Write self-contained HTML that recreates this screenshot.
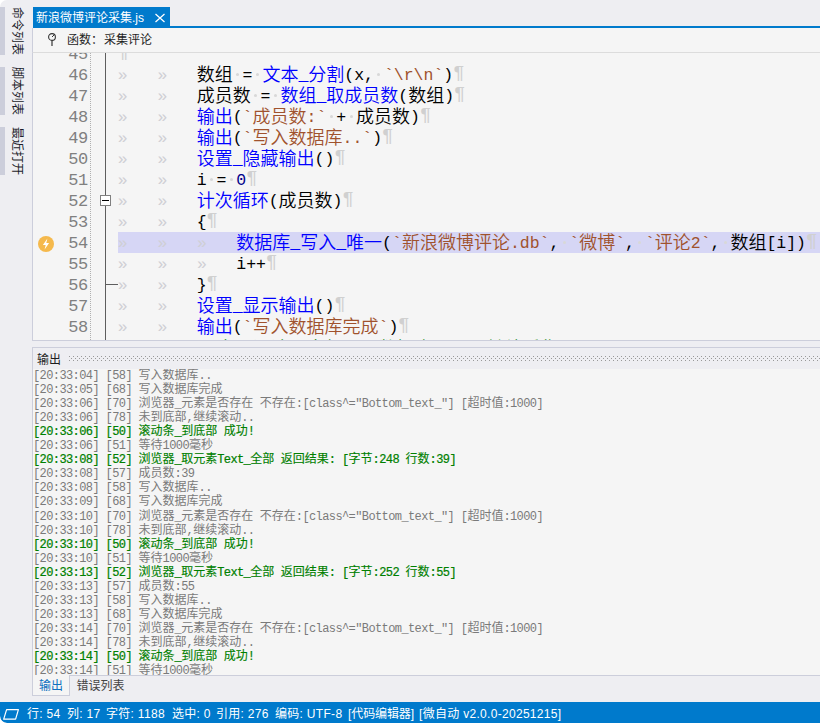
<!DOCTYPE html>
<html lang="zh-CN">
<head>
<meta charset="utf-8">
<title>新浪微博评论采集.js</title>
<style>
html,body{margin:0;padding:0}
html{background:#fff}
body{width:820px;height:723px;overflow:hidden;position:relative;background:#eeeef2;border-radius:7px 0 0 7px;
 font-family:"Liberation Sans","Noto Sans CJK SC",sans-serif;font-size:12px;color:#1e1e1e}
div,span,i{box-sizing:border-box}
.abs{position:absolute}
/* ---- side bar ---- */
.sbar{position:absolute;left:0;width:5px;height:48px;background:#ccceDB}
.stxt{position:absolute;left:4.5px;width:24px;height:48px;writing-mode:vertical-rl;text-orientation:sideways;
 font-size:12px;line-height:24px;color:#1c1c2a;white-space:nowrap;letter-spacing:0}
/* ---- doc tab ---- */
#tab{position:absolute;left:33px;top:7px;width:137px;height:19px;background:#007acc;color:#fff;font-size:12px;line-height:19px;white-space:nowrap}
#tab .t{position:absolute;left:3px;top:2px}
#tabline{position:absolute;left:33px;top:26px;width:787px;height:2px;background:#007acc}
#fbar{position:absolute;left:32px;top:28px;width:788px;height:25px;background:#f5f5f5;border-left:1px solid #ccceDB;border-bottom:1px solid #dcdcdc}
#fbar .t{position:absolute;left:34px;top:4px;font-size:12px;line-height:16px;color:#1e1e1e;white-space:nowrap}
/* ---- editor ---- */
#ed{position:absolute;left:32px;top:53px;width:788px;height:288px;background:#f5f5f5;overflow:hidden;
 border-left:1px solid #ccceDB;border-bottom:1px solid #ccceDB}
#edin{position:absolute;left:-33px;top:-53px;width:820px;height:723px}
.ln{position:absolute;left:0;width:820px;height:21px}
.ln.hl::before{content:"";position:absolute;left:118px;top:0;width:702px;height:21px;background:#d6d6f5}
.ln span,.ln i{position:absolute;top:0;height:21px;line-height:21px;white-space:pre;font-style:normal}
.a{font-family:"Liberation Mono",monospace;font-size:16.5px;margin-top:1px}
.c{font-family:"Noto Sans CJK SC",sans-serif;font-size:18px;margin-top:-1px;font-weight:350}
.k{color:#000}
.f{color:#0000ff}
.s{color:#a0522d}
.eol{color:#d0d0d0;font-size:19px !important;margin-top:-1px !important}
.m{color:#008000}
.d{color:#00008b}
.tb{font-family:"Liberation Mono",monospace;font-size:16.5px;color:#cfcfd4;margin-top:1px}
.dt{width:3px;height:3px !important;top:9px !important;border-radius:50%;background:#d8d8d8}
.num{position:absolute;left:33px;width:55px;height:21px;line-height:21px;text-align:right;
 font-family:"Liberation Mono",monospace;font-size:17px;letter-spacing:-0.3px;color:#808080;margin-top:1px}
#dots{position:absolute;left:90px;top:53px;width:1px;height:288px;
 background:repeating-linear-gradient(to bottom,#b0b0b0 0,#b0b0b0 1px,transparent 1px,transparent 2px)}
#fold{position:absolute;left:105px;top:53px;width:1px;height:288px;background:#5e5e5e}
#fbox{position:absolute;left:100px;top:195px;width:11px;height:11px;border:1px solid #808080;background:#fff}
#fbox::after{content:"";position:absolute;left:1px;top:4px;width:7px;height:1px;background:#000}
#fend{position:absolute;left:105px;top:284px;width:13px;height:1px;background:#5e5e5e}
#bolt{position:absolute;left:37.7px;top:235.5px;width:16px;height:16px}
/* ---- output ---- */
#op{position:absolute;left:32px;top:347px;width:788px;height:329px;border-left:1px solid #ccceDB;border-top:1px solid #ccceDB;border-bottom:1px solid #ccceDB;background:#eeeef2}
#optitle{position:absolute;left:37px;top:352px;font-size:12px;line-height:16px;color:#1e1e1e}
#grip{position:absolute;left:69px;top:356px;width:751px;height:5px}
#ot{position:absolute;left:33px;top:369px;width:787px;height:306px;background:#f5f5f5;overflow:hidden}
#otin{position:absolute;left:-33px;top:-369px;width:820px;height:723px}
.ol{position:absolute;left:0;width:820px;height:14px}
.ol span{position:absolute;top:0;height:14px;line-height:14px;white-space:pre}
.oa{font-family:"Liberation Mono",monospace;font-size:12px;letter-spacing:-0.6px;margin-top:1px}
.oc{font-family:"Noto Sans CJK SC",sans-serif;font-size:12px;margin-top:-1px}
.n{color:#7a7a7a}
.g{color:#008000;-webkit-text-stroke:0.22px #008000}
.g .oc{-webkit-text-stroke:0.12px #008000}
/* ---- bottom tabs ---- */
#bt1{position:absolute;left:32px;top:675px;width:38px;height:21px;background:#f5f5f5;border:1px solid #ccceDB;border-top:none;color:#0e70c0;font-size:12px;line-height:22px;text-align:center;overflow:hidden}
#bt2{position:absolute;left:76.5px;top:675px;font-size:12px;line-height:22px;color:#444}
/* ---- status ---- */
#sb{position:absolute;left:0;top:702px;width:820px;height:21px;background:#007acc;color:#fff;font-size:12px;border-bottom-left-radius:7px}
#sb span{position:absolute;top:2px;height:21px;line-height:21px;white-space:pre;letter-spacing:0.3px}
</style>
</head>
<body>
<!-- side bar -->
<div class="sbar" style="top:7px"></div><div class="stxt" style="top:7px">命令列表</div>
<div class="sbar" style="top:67px"></div><div class="stxt" style="top:67px">脚本列表</div>
<div class="sbar" style="top:127px"></div><div class="stxt" style="top:127px">最近打开</div>

<!-- document tab -->
<div id="tab"><span class="t">新浪微博评论采集.js</span>
<svg class="abs" style="left:122px;top:6px" width="10" height="10" viewBox="0 0 10 10"><path d="M0.5 1 L9.5 9 M9.5 1 L0.5 9" stroke="#fff" stroke-width="1.25" fill="none"/></svg></div>
<div id="tabline"></div>
<div id="fbar">
<svg class="abs" style="left:14px;top:4px" width="10" height="15" viewBox="0 0 10 15"><circle cx="5" cy="5" r="3.4" fill="none" stroke="#333" stroke-width="1.1"/><path d="M5 8.4 V14" stroke="#333" stroke-width="1.2"/><path d="M5 5 L7 3" stroke="#333" stroke-width="1"/></svg>
<span class="t">函数：</span><span class="t" style="left:71px">采集评论</span></div>

<!-- editor -->
<div id="ed"><div id="edin">
<div class="num" style="top:43px">45</div>
<div class="num" style="top:64px">46</div>
<div class="num" style="top:85px">47</div>
<div class="num" style="top:106px">48</div>
<div class="num" style="top:127px">49</div>
<div class="num" style="top:148px">50</div>
<div class="num" style="top:169px">51</div>
<div class="num" style="top:190px">52</div>
<div class="num" style="top:211px">53</div>
<div class="num" style="top:232px">54</div>
<div class="num" style="top:253px">55</div>
<div class="num" style="top:274px">56</div>
<div class="num" style="top:295px">57</div>
<div class="num" style="top:316px">58</div>
<div class="num" style="top:337px">59</div>
<div id="dots"></div>
<div id="fold"></div>
<div id="fbox"></div>
<div id="fend"></div>
<div class="ln" style="top:43px">
<span class="a eol" style="left:117.5px">¶</span>
</div>
<div class="ln" style="top:64px">
<i class="tb" style="left:117.8px">»</i>
<i class="tb" style="left:157.4px">»</i>
<span class="c k" style="left:196.7px">数组</span>
<i class="dt" style="left:236.1px"></i>
<span class="a k" style="left:242.6px">=</span>
<i class="dt" style="left:255.9px"></i>
<span class="c f" style="left:262.4px">文本</span>
<span class="a f" style="left:298.4px">_</span>
<span class="c f" style="left:308.3px">分割</span>
<span class="a k" style="left:344.3px">(x,</span>
<i class="dt" style="left:377.4px"></i>
<span class="a s" style="left:383.9px">`\r\n`</span>
<span class="a k" style="left:443.3px">)</span>
<span class="a eol" style="left:453.2px">¶</span>
</div>
<div class="ln" style="top:85px">
<i class="tb" style="left:117.8px">»</i>
<i class="tb" style="left:157.4px">»</i>
<span class="c k" style="left:196.7px">成员数</span>
<i class="dt" style="left:254.1px"></i>
<span class="a k" style="left:260.6px">=</span>
<i class="dt" style="left:273.9px"></i>
<span class="c f" style="left:280.4px">数组</span>
<span class="a f" style="left:316.4px">_</span>
<span class="c f" style="left:326.3px">取成员数</span>
<span class="a k" style="left:398.3px">(</span>
<span class="c k" style="left:408.2px">数组</span>
<span class="a k" style="left:444.2px">)</span>
<span class="a eol" style="left:454.1px">¶</span>
</div>
<div class="ln" style="top:106px">
<i class="tb" style="left:117.8px">»</i>
<i class="tb" style="left:157.4px">»</i>
<span class="c f" style="left:196.7px">输出</span>
<span class="a k" style="left:232.7px">(</span>
<span class="a s" style="left:242.6px">`</span>
<span class="c s" style="left:252.5px">成员数</span>
<span class="a s" style="left:306.5px">:`</span>
<i class="dt" style="left:329.7px"></i>
<span class="a k" style="left:336.2px">+</span>
<i class="dt" style="left:349.5px"></i>
<span class="c k" style="left:356.0px">成员数</span>
<span class="a k" style="left:410.0px">)</span>
<span class="a eol" style="left:419.9px">¶</span>
</div>
<div class="ln" style="top:127px">
<i class="tb" style="left:117.8px">»</i>
<i class="tb" style="left:157.4px">»</i>
<span class="c f" style="left:196.7px">输出</span>
<span class="a k" style="left:232.7px">(</span>
<span class="a s" style="left:242.6px">`</span>
<span class="c s" style="left:252.5px">写入数据库</span>
<span class="a s" style="left:342.5px">..`</span>
<span class="a k" style="left:372.2px">)</span>
<span class="a eol" style="left:382.1px">¶</span>
</div>
<div class="ln" style="top:148px">
<i class="tb" style="left:117.8px">»</i>
<i class="tb" style="left:157.4px">»</i>
<span class="c f" style="left:196.7px">设置</span>
<span class="a f" style="left:232.7px">_</span>
<span class="c f" style="left:242.6px">隐藏输出</span>
<span class="a k" style="left:314.6px">()</span>
<span class="a eol" style="left:334.4px">¶</span>
</div>
<div class="ln" style="top:169px">
<i class="tb" style="left:117.8px">»</i>
<i class="tb" style="left:157.4px">»</i>
<span class="a k" style="left:196.7px">i</span>
<i class="dt" style="left:210.0px"></i>
<span class="a k" style="left:216.5px">=</span>
<i class="dt" style="left:229.8px"></i>
<span class="a d" style="left:236.3px">0</span>
<span class="a eol" style="left:246.2px">¶</span>
</div>
<div class="ln" style="top:190px">
<i class="tb" style="left:117.8px">»</i>
<i class="tb" style="left:157.4px">»</i>
<span class="c f" style="left:196.7px">计次循环</span>
<span class="a k" style="left:268.7px">(</span>
<span class="c k" style="left:278.6px">成员数</span>
<span class="a k" style="left:332.6px">)</span>
<span class="a eol" style="left:342.5px">¶</span>
</div>
<div class="ln" style="top:211px">
<i class="tb" style="left:117.8px">»</i>
<i class="tb" style="left:157.4px">»</i>
<span class="a k" style="left:196.7px">{</span>
<span class="a eol" style="left:206.6px">¶</span>
</div>
<div class="ln hl" style="top:232px">
<i class="tb" style="left:117.8px">»</i>
<i class="tb" style="left:157.4px">»</i>
<i class="tb" style="left:197.0px">»</i>
<span class="c f" style="left:236.3px">数据库</span>
<span class="a f" style="left:290.3px">_</span>
<span class="c f" style="left:300.2px">写入</span>
<span class="a f" style="left:336.2px">_</span>
<span class="c f" style="left:346.1px">唯一</span>
<span class="a k" style="left:382.1px">(</span>
<span class="a s" style="left:392.0px">`</span>
<span class="c s" style="left:401.9px">新浪微博评论</span>
<span class="a s" style="left:509.9px">.db`</span>
<span class="a k" style="left:549.5px">,</span>
<i class="dt" style="left:562.8px"></i>
<span class="a s" style="left:569.3px">`</span>
<span class="c s" style="left:579.2px">微博</span>
<span class="a s" style="left:615.2px">`</span>
<span class="a k" style="left:625.1px">,</span>
<i class="dt" style="left:638.4px"></i>
<span class="a s" style="left:644.9px">`</span>
<span class="c s" style="left:654.8px">评论</span>
<span class="a s" style="left:690.8px">2`</span>
<span class="a k" style="left:710.6px">,</span>
<i class="dt" style="left:723.9px"></i>
<span class="c k" style="left:730.4px">数组</span>
<span class="a k" style="left:766.4px">[i])</span>
<span class="a eol" style="left:806.0px">¶</span>
</div>
<div class="ln" style="top:253px">
<i class="tb" style="left:117.8px">»</i>
<i class="tb" style="left:157.4px">»</i>
<i class="tb" style="left:197.0px">»</i>
<span class="a k" style="left:236.3px">i++</span>
<span class="a eol" style="left:266.0px">¶</span>
</div>
<div class="ln" style="top:274px">
<i class="tb" style="left:117.8px">»</i>
<i class="tb" style="left:157.4px">»</i>
<span class="a k" style="left:196.7px">}</span>
<span class="a eol" style="left:206.6px">¶</span>
</div>
<div class="ln" style="top:295px">
<i class="tb" style="left:117.8px">»</i>
<i class="tb" style="left:157.4px">»</i>
<span class="c f" style="left:196.7px">设置</span>
<span class="a f" style="left:232.7px">_</span>
<span class="c f" style="left:242.6px">显示输出</span>
<span class="a k" style="left:314.6px">()</span>
<span class="a eol" style="left:334.4px">¶</span>
</div>
<div class="ln" style="top:316px">
<i class="tb" style="left:117.8px">»</i>
<i class="tb" style="left:157.4px">»</i>
<span class="c f" style="left:196.7px">输出</span>
<span class="a k" style="left:232.7px">(</span>
<span class="a s" style="left:242.6px">`</span>
<span class="c s" style="left:252.5px">写入数据库完成</span>
<span class="a s" style="left:378.5px">`</span>
<span class="a k" style="left:388.4px">)</span>
<span class="a eol" style="left:398.3px">¶</span>
</div>
<div class="ln" style="top:338px">
<i class="tb" style="left:117.8px">»</i>
<i class="tb" style="left:157.4px">»</i>
<span class="a m" style="left:196.7px">//</span>
<span class="c m" style="left:216.5px">当日评论已全部写入数据库，可以继续采集下一页了</span>
</div>
<svg id="bolt" viewBox="0 0 16 16"><circle cx="8" cy="8" r="8" fill="#f5b94c"/><path d="M9.4 2.6 L4.9 9 H7.7 L6.6 13.4 L11.1 7 H8.3 Z" fill="#fff"/></svg>
</div></div>

<!-- output panel -->
<div id="op"></div>
<div id="optitle">输出</div>
<svg id="grip" width="751" height="5"><defs><pattern id="gp" width="4" height="4" patternUnits="userSpaceOnUse"><rect x="0" y="0" width="1" height="1" fill="#999"/><rect x="2" y="2" width="1" height="1" fill="#999"/></pattern></defs><rect width="751" height="5" fill="url(#gp)"/></svg>
<div id="ot"><div id="otin">
<div class="ol n" style="top:368.0px">
<span class="oa" style="left:33.0px">[20:33:04] [58] </span>
<span class="oc" style="left:138.6px">写入数据库</span>
<span class="oa" style="left:198.6px">..</span>
</div>
<div class="ol n" style="top:382.05px">
<span class="oa" style="left:33.0px">[20:33:05] [68] </span>
<span class="oc" style="left:138.6px">写入数据库完成</span>
</div>
<div class="ol n" style="top:396.1px">
<span class="oa" style="left:33.0px">[20:33:06] [70] </span>
<span class="oc" style="left:138.6px">浏览器</span>
<span class="oa" style="left:174.6px">_</span>
<span class="oc" style="left:181.2px">元素是否存在</span>
<span class="oa" style="left:253.2px"> </span>
<span class="oc" style="left:259.8px">不存在</span>
<span class="oa" style="left:295.8px">:[class^="Bottom_text_"] [</span>
<span class="oc" style="left:467.4px">超时值</span>
<span class="oa" style="left:503.4px">:1000]</span>
</div>
<div class="ol n" style="top:410.15px">
<span class="oa" style="left:33.0px">[20:33:06] [78] </span>
<span class="oc" style="left:138.6px">未到底部</span>
<span class="oa" style="left:186.6px">,</span>
<span class="oc" style="left:193.2px">继续滚动</span>
<span class="oa" style="left:241.2px">..</span>
</div>
<div class="ol g" style="top:424.2px">
<span class="oa" style="left:33.0px">[20:33:06] [50] </span>
<span class="oc" style="left:138.6px">滚动条</span>
<span class="oa" style="left:174.6px">_</span>
<span class="oc" style="left:181.2px">到底部</span>
<span class="oa" style="left:217.2px"> </span>
<span class="oc" style="left:223.8px">成功</span>
<span class="oa" style="left:247.8px">!</span>
</div>
<div class="ol n" style="top:438.25px">
<span class="oa" style="left:33.0px">[20:33:06] [51] </span>
<span class="oc" style="left:138.6px">等待</span>
<span class="oa" style="left:162.6px">1000</span>
<span class="oc" style="left:189.0px">毫秒</span>
</div>
<div class="ol g" style="top:452.3px">
<span class="oa" style="left:33.0px">[20:33:08] [52] </span>
<span class="oc" style="left:138.6px">浏览器</span>
<span class="oa" style="left:174.6px">_</span>
<span class="oc" style="left:181.2px">取元素</span>
<span class="oa" style="left:217.2px">Text_</span>
<span class="oc" style="left:250.2px">全部</span>
<span class="oa" style="left:274.2px"> </span>
<span class="oc" style="left:280.8px">返回结果</span>
<span class="oa" style="left:328.8px">: [</span>
<span class="oc" style="left:348.6px">字节</span>
<span class="oa" style="left:372.6px">:248 </span>
<span class="oc" style="left:405.6px">行数</span>
<span class="oa" style="left:429.6px">:39]</span>
</div>
<div class="ol n" style="top:466.35px">
<span class="oa" style="left:33.0px">[20:33:08] [57] </span>
<span class="oc" style="left:138.6px">成员数</span>
<span class="oa" style="left:174.6px">:39</span>
</div>
<div class="ol n" style="top:480.4px">
<span class="oa" style="left:33.0px">[20:33:08] [58] </span>
<span class="oc" style="left:138.6px">写入数据库</span>
<span class="oa" style="left:198.6px">..</span>
</div>
<div class="ol n" style="top:494.45px">
<span class="oa" style="left:33.0px">[20:33:09] [68] </span>
<span class="oc" style="left:138.6px">写入数据库完成</span>
</div>
<div class="ol n" style="top:508.5px">
<span class="oa" style="left:33.0px">[20:33:10] [70] </span>
<span class="oc" style="left:138.6px">浏览器</span>
<span class="oa" style="left:174.6px">_</span>
<span class="oc" style="left:181.2px">元素是否存在</span>
<span class="oa" style="left:253.2px"> </span>
<span class="oc" style="left:259.8px">不存在</span>
<span class="oa" style="left:295.8px">:[class^="Bottom_text_"] [</span>
<span class="oc" style="left:467.4px">超时值</span>
<span class="oa" style="left:503.4px">:1000]</span>
</div>
<div class="ol n" style="top:522.55px">
<span class="oa" style="left:33.0px">[20:33:10] [78] </span>
<span class="oc" style="left:138.6px">未到底部</span>
<span class="oa" style="left:186.6px">,</span>
<span class="oc" style="left:193.2px">继续滚动</span>
<span class="oa" style="left:241.2px">..</span>
</div>
<div class="ol g" style="top:536.6px">
<span class="oa" style="left:33.0px">[20:33:10] [50] </span>
<span class="oc" style="left:138.6px">滚动条</span>
<span class="oa" style="left:174.6px">_</span>
<span class="oc" style="left:181.2px">到底部</span>
<span class="oa" style="left:217.2px"> </span>
<span class="oc" style="left:223.8px">成功</span>
<span class="oa" style="left:247.8px">!</span>
</div>
<div class="ol n" style="top:550.65px">
<span class="oa" style="left:33.0px">[20:33:10] [51] </span>
<span class="oc" style="left:138.6px">等待</span>
<span class="oa" style="left:162.6px">1000</span>
<span class="oc" style="left:189.0px">毫秒</span>
</div>
<div class="ol g" style="top:564.7px">
<span class="oa" style="left:33.0px">[20:33:13] [52] </span>
<span class="oc" style="left:138.6px">浏览器</span>
<span class="oa" style="left:174.6px">_</span>
<span class="oc" style="left:181.2px">取元素</span>
<span class="oa" style="left:217.2px">Text_</span>
<span class="oc" style="left:250.2px">全部</span>
<span class="oa" style="left:274.2px"> </span>
<span class="oc" style="left:280.8px">返回结果</span>
<span class="oa" style="left:328.8px">: [</span>
<span class="oc" style="left:348.6px">字节</span>
<span class="oa" style="left:372.6px">:252 </span>
<span class="oc" style="left:405.6px">行数</span>
<span class="oa" style="left:429.6px">:55]</span>
</div>
<div class="ol n" style="top:578.75px">
<span class="oa" style="left:33.0px">[20:33:13] [57] </span>
<span class="oc" style="left:138.6px">成员数</span>
<span class="oa" style="left:174.6px">:55</span>
</div>
<div class="ol n" style="top:592.8px">
<span class="oa" style="left:33.0px">[20:33:13] [58] </span>
<span class="oc" style="left:138.6px">写入数据库</span>
<span class="oa" style="left:198.6px">..</span>
</div>
<div class="ol n" style="top:606.85px">
<span class="oa" style="left:33.0px">[20:33:13] [68] </span>
<span class="oc" style="left:138.6px">写入数据库完成</span>
</div>
<div class="ol n" style="top:620.9px">
<span class="oa" style="left:33.0px">[20:33:14] [70] </span>
<span class="oc" style="left:138.6px">浏览器</span>
<span class="oa" style="left:174.6px">_</span>
<span class="oc" style="left:181.2px">元素是否存在</span>
<span class="oa" style="left:253.2px"> </span>
<span class="oc" style="left:259.8px">不存在</span>
<span class="oa" style="left:295.8px">:[class^="Bottom_text_"] [</span>
<span class="oc" style="left:467.4px">超时值</span>
<span class="oa" style="left:503.4px">:1000]</span>
</div>
<div class="ol n" style="top:634.95px">
<span class="oa" style="left:33.0px">[20:33:14] [78] </span>
<span class="oc" style="left:138.6px">未到底部</span>
<span class="oa" style="left:186.6px">,</span>
<span class="oc" style="left:193.2px">继续滚动</span>
<span class="oa" style="left:241.2px">..</span>
</div>
<div class="ol g" style="top:649.0px">
<span class="oa" style="left:33.0px">[20:33:14] [50] </span>
<span class="oc" style="left:138.6px">滚动条</span>
<span class="oa" style="left:174.6px">_</span>
<span class="oc" style="left:181.2px">到底部</span>
<span class="oa" style="left:217.2px"> </span>
<span class="oc" style="left:223.8px">成功</span>
<span class="oa" style="left:247.8px">!</span>
</div>
<div class="ol n" style="top:663.05px">
<span class="oa" style="left:33.0px">[20:33:14] [51] </span>
<span class="oc" style="left:138.6px">等待</span>
<span class="oa" style="left:162.6px">1000</span>
<span class="oc" style="left:189.0px">毫秒</span>
</div>
</div></div>
<div id="bt1">输出</div>
<div id="bt2">错误列表</div>

<!-- status bar -->
<div id="sb">
<svg class="abs" style="left:2px;top:6px" width="18" height="13" viewBox="0 0 18 13"><path d="M4.6 1.6 H16.4 L13.6 11.2 H1.7 Z" fill="none" stroke="#fff" stroke-width="1.2" stroke-linejoin="round"/></svg>
<span style="left:27px">行: 54</span>
<span style="left:67px">列: 17</span>
<span style="left:106px">字符: 1188</span>
<span style="left:172px">选中: 0</span>
<span style="left:216px">引用: 276</span>
<span style="left:275px">编码: UTF-8</span>
<span style="left:348px;letter-spacing:-0.1px">[代码编辑器]</span>
<span style="left:419px">[微自动 v2.0.0-20251215]</span>
</div>
</body>
</html>
